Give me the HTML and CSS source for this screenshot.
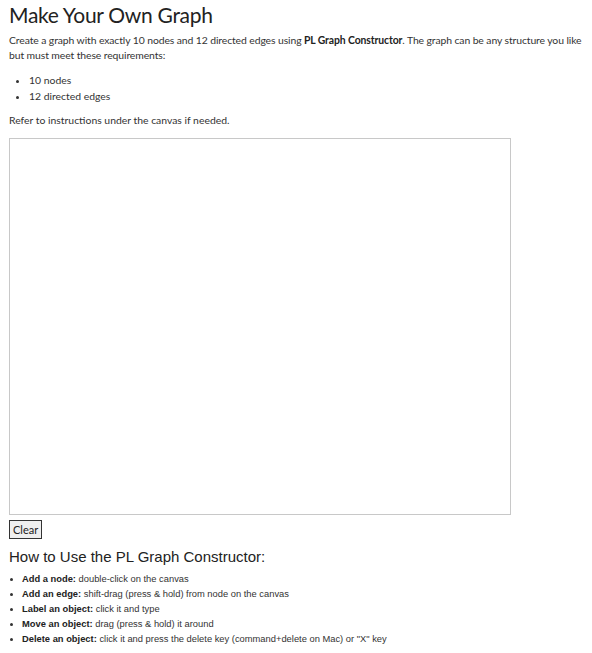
FILE: index.html
```html
<!DOCTYPE html>
<html>
<head>
<meta charset="utf-8">
<link rel="stylesheet" href="styles.css">
</head>
<body>
<div class="page">
  <h1 class="title">Make Your Own Graph</h1>
  <p class="intro">Create a graph with exactly 10 nodes and 12 directed edges using <b>PL Graph Constructor</b>. The graph can be any structure you like but must meet these requirements:</p>
  <ul class="reqs">
    <li>10 nodes</li>
    <li>12 directed edges</li>
  </ul>
  <p class="refer">Refer to instructions under the canvas if needed.</p>
  <div class="canvas"></div>
  <button class="clear">Clear</button>
  <h2 class="howto">How to Use the PL Graph Constructor:</h2>
  <ul class="steps">
    <li><b>Add a node:</b> double-click on the canvas</li>
    <li><b>Add an edge:</b> shift-drag (press &amp; hold) from node on the canvas</li>
    <li><b>Label an object:</b> click it and type</li>
    <li><b>Move an object:</b> drag (press &amp; hold) it around</li>
    <li><b>Delete an object:</b> click it and press the delete key (command+delete on Mac) or "X" key</li>
  </ul>
</div>
</body>
</html>
```
FILE: styles.css
```css
html, body {
  margin: 0;
  padding: 0;
  background: #fff;
}
.page {
  padding: 0 0 0 9px;
  font-family: Lato, "Open Sans", sans-serif;
  font-size: 10.4px;
  color: #333;
}
.title {
  font-size: 21px;
  letter-spacing: -0.3px;
  font-weight: 400;
  line-height: 26px;
  margin: 2px 0 5px;
  color: #222;
}
.intro {
  margin: 0;
  line-height: 15px;
  letter-spacing: -0.1px;
}
.intro b {
  color: #222;
}
.reqs {
  margin: 9px 0 8px;
  padding-left: 20px;
  line-height: 16px;
}
.refer {
  margin: 0 0 10px;
  line-height: 16px;
}
.canvas {
  width: 500px;
  height: 375px;
  border: 1px solid #c8c8c8;
}
.clear {
  display: block;
  margin-top: 5px;
  font-family: Lato, sans-serif;
  font-size: 11px;
  color: #222;
  background: #efefef;
  border: 1px solid #333;
  padding: 1px 3px;
  height: 19px;
}
.howto {
  font-family: "Liberation Sans", Arial, sans-serif;
  font-size: 15px;
  font-weight: 400;
  margin: 9px 0 7px;
  color: #222;
}
.steps {
  font-family: "Liberation Sans", Arial, sans-serif;
  font-size: 9.35px;
  line-height: 15px;
  margin: 0;
  padding-left: 13px;
  color: #333;
}
.steps b {
  color: #222;
}
```
